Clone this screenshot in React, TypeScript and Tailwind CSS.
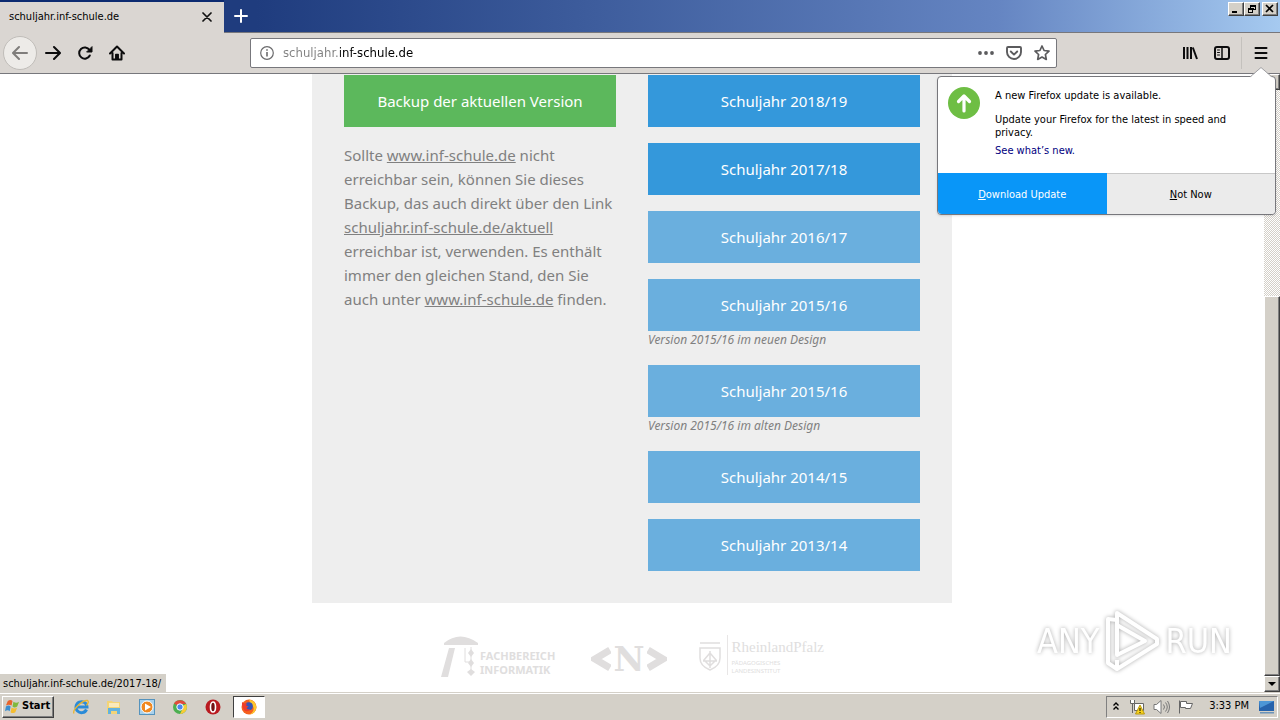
import type { ReactNode } from 'react';

const outset =
  'border border-t-white border-l-white border-r-[#404040] border-b-[#404040] bg-[#d4d0c8] shadow-[inset_-1px_-1px_0_#808080]';

function WindowButton({ label, children }: { label: string; children: ReactNode }) {
  return (
    <button aria-label={label} className={`flex h-[14px] w-4 items-center justify-center ${outset}`}>
      <svg width="12" height="10" viewBox="0 0 12 10" fill="none" stroke="#000" shapeRendering="crispEdges">
        {children}
      </svg>
    </button>
  );
}

function TitleBar() {
  return (
    <header className="flex h-[33px] shrink-0 border-b border-[#77777c] bg-linear-to-r from-[#1f3c7e] from-20% via-[#6585c2] via-78% to-[#a6caf0]">
      <div className="-mb-px flex w-56 items-center justify-between border-t-2 border-[#0c2a70] bg-[#dad6d2] pr-3 pb-px pl-[9px] text-[11px]">
        <span>schuljahr.inf-schule.de</span>
        <button aria-label="Close tab">
          <svg width="10" height="10" viewBox="0 0 10 10" stroke="#111" strokeWidth="1.7" strokeLinecap="round">
            <path d="M1 1l8 8M9 1L1 9" />
          </svg>
        </button>
      </div>
      <button aria-label="New tab" className="flex w-[34px] items-center justify-center">
        <svg width="14" height="14" viewBox="0 0 14 14" stroke="#fff" strokeWidth="2" strokeLinecap="round">
          <path d="M7 1v12M1 7h12" />
        </svg>
      </button>
      <div className="ml-auto flex items-start pt-0.5 pr-0.5">
        <WindowButton label="Minimize">
          <path d="M2 8h5" strokeWidth="2" />
        </WindowButton>
        <WindowButton label="Restore">
          <path d="M4 1h6M4 2h6M9.500 1v5M4.500 1v3M7 5.500h3M2 4.500h5.500M2 5.500h5.500M2.500 4v5M6.500 4v5M2 8.500h5" />
        </WindowButton>
        <div className="w-0.5" />
        <WindowButton label="Close">
          <path d="M2 1l7 7M9 1l-7 7" strokeWidth="1.700" shapeRendering="auto" />
        </WindowButton>
      </div>
    </header>
  );
}

function ToolButton({ label, children }: { label: string; children: ReactNode }) {
  return (
    <button aria-label={label} className="flex size-8 items-center justify-center">
      <svg width="16" height="16" viewBox="0 0 16 16" fill="none" stroke="#0c0c0d" strokeWidth="2" strokeLinecap="round" strokeLinejoin="round">
        {children}
      </svg>
    </button>
  );
}

function Toolbar() {
  return (
    <nav className="flex h-[41px] shrink-0 items-center border-b border-[#77777c] bg-[#dad6d2] pr-[3px] pl-[3px]">
      <button aria-label="Back" className="flex size-[34px] items-center justify-center rounded-full border border-[#c0bdb9] bg-[#edebe8]">
        <svg width="16" height="16" viewBox="0 0 16 16" fill="none" stroke="#7f7d7b" strokeWidth="2" strokeLinecap="round" strokeLinejoin="round">
          <path d="M15 8H1.500M7 2L1 8l6 6" />
        </svg>
      </button>
      <ToolButton label="Forward">
        <path d="M1 8h13.500M9 2l6 6-6 6" />
      </ToolButton>
      <ToolButton label="Reload">
        <path d="M12.800 10.500A5.600 5.600 0 1 1 12.500 5" />
        <path d="M10 7h5V2z" fill="#0c0c0d" strokeWidth="1" />
      </ToolButton>
      <ToolButton label="Home">
        <path d="M1 8.500l7-7 7 7M3.500 8v6.500h9V8" />
        <path d="M6.800 9.500h2.400v4.500H6.800z" strokeWidth="1.500" fill="#0c0c0d" />
      </ToolButton>
      <form className="mr-[117px] ml-[117px] flex h-[30px] min-w-0 flex-1 items-center rounded-xs border border-[#77777c] bg-white pr-1.5 pl-[9px]">
        <svg width="14" height="14" viewBox="0 0 14 14" fill="none" stroke="#6b6b6d" className="shrink-0">
          <circle cx="7" cy="7" r="6.300" strokeWidth="1.200" />
          <path d="M7 6v4.500M7 3.300v1.500" strokeWidth="1.600" />
        </svg>
        <input
          aria-label="Address"
          defaultValue="schuljahr.inf-schule.de"
          className="ml-[9px] min-w-0 flex-1 bg-linear-to-r from-[#808080] from-[57px] to-black to-[57px] bg-clip-text text-[13px] text-transparent outline-none"
        />
        <div className="flex items-center gap-3 text-[#5b5b5d]">
          <button type="button" aria-label="Page actions">
            <svg width="16" height="16" viewBox="0 0 16 16" fill="currentColor">
              <circle cx="2" cy="8" r="1.900" />
              <circle cx="8" cy="8" r="1.900" />
              <circle cx="14" cy="8" r="1.900" />
            </svg>
          </button>
          <button type="button" aria-label="Save to Pocket">
            <svg width="16" height="16" viewBox="0 0 16 16" fill="none" stroke="currentColor" strokeWidth="1.900" strokeLinecap="round" strokeLinejoin="round">
              <path d="M2 2h12a1 1 0 0 1 1 1v4a7 7 0 0 1-14 0V3a1 1 0 0 1 1-1zM4.800 6.500L8 9.600l3.200-3.100" />
            </svg>
          </button>
          <button type="button" aria-label="Bookmark">
            <svg width="16" height="16" viewBox="0 0 16 16" fill="none" stroke="currentColor" strokeWidth="1.700" strokeLinejoin="round">
              <path d="M8 1l2.100 4.500 4.900.600-3.600 3.400.900 4.900L8 12l-4.300 2.400.900-4.900L1 6.100l4.900-.600z" />
            </svg>
          </button>
        </div>
      </form>
      <ToolButton label="Library">
        <path d="M2 2v12M5.500 2v12M9 2v12M10.800 2.500L15 14" strokeLinecap="butt" />
      </ToolButton>
      <ToolButton label="Sidebars">
        <rect x="1" y="2" width="14" height="12" rx="2" />
        <path d="M8 2v12" strokeWidth="1.500" />
        <path d="M3.500 5h2M3.500 7.500h2M3.500 10h2" strokeWidth="1" />
      </ToolButton>
      <div className="mr-[3px] ml-[3px] h-8 border-l border-[#c4c1bd]" />
      <ToolButton label="Menu">
        <path d="M2.500 3h11M2.500 8h11M2.500 13h11" />
      </ToolButton>
    </nav>
  );
}

const years = [
  { label: 'Schuljahr 2018/19', recent: true },
  { label: 'Schuljahr 2017/18', recent: true },
  { label: 'Schuljahr 2016/17' },
  { label: 'Schuljahr 2015/16', note: 'Version 2015/16 im neuen Design' },
  { label: 'Schuljahr 2015/16', note: 'Version 2015/16 im alten Design' },
  { label: 'Schuljahr 2014/15' },
  { label: 'Schuljahr 2013/14' },
];

function Logos() {
  return (
    <footer className="mx-auto mt-7 flex w-96 items-start text-[#e0dede]">
      <div className="flex items-end pt-1">
        <svg width="40" height="42" viewBox="0 0 40 42" fill="currentColor">
          <path d="M4 8Q20-5 38 8v2H4zM9 13h6L8 42H1z" />
          <path d="M31 14l3 4-3 4-3-4zM31 24l3 4-3 4-3-4zM31 34l4 3-4 4-4-4z" />
          <path d="M25 13v14h5M31 12v26" stroke="currentColor" fill="none" />
        </svg>
        <p className="text-[11px] leading-[14px] font-bold">
          FACHBEREICH
          <br />
          INFORMATIK
        </p>
      </div>
      <div className="ml-auto flex items-center pt-3">
        <svg width="20" height="24" viewBox="0 0 20 24" fill="none" stroke="currentColor" strokeWidth="7">
          <path d="M19 3L4 12l15 9" />
        </svg>
        <span className="px-0.5 font-['DejaVu_Serif',serif] text-[34px] leading-8 font-bold">N</span>
        <svg width="20" height="24" viewBox="0 0 20 24" fill="none" stroke="currentColor" strokeWidth="7">
          <path d="M1 3l15 9-15 9" />
        </svg>
      </div>
      <div className="ml-8 flex pt-1">
        <svg width="22" height="30" viewBox="0 0 22 30" fill="none" stroke="currentColor" className="mt-1.5">
          <path d="M1 2h20M1 7h20v10q0 8-10 12Q1 25 1 17z" strokeWidth="1.500" />
          <path d="M11 12l6 7-6 6-6-6zM4 20h14M11 10v17" strokeWidth="1.500" />
        </svg>
        <div className="ml-1.5 border-l border-[#e8e6e6] pl-1">
          <p className="font-['Liberation_Serif',serif] text-[15px] leading-6">RheinlandPfalz</p>
          <p className="text-[6px] leading-[8px]">
            PÄDAGOGISCHES
            <br />
            LANDESINSTITUT
          </p>
        </div>
      </div>
    </footer>
  );
}

function Page() {
  return (
    <main className="min-w-0 flex-1 overflow-hidden bg-white font-['Noto_Sans',sans-serif] text-[15px] leading-6 text-[#808080]">
      <div className="mx-auto grid w-[640px] grid-cols-2 gap-8 bg-[#eee] px-8 pt-px pb-8">
        <section>
          <a href="#aktuell" className="block bg-[#5cb85c] py-[14px] text-center text-white">
            Backup der aktuellen Version
          </a>
          <p className="mt-4 whitespace-nowrap">
            Sollte <a href="#inf-schule" className="underline">www.inf-schule.de</a> nicht
            <br />
            erreichbar sein, können Sie dieses
            <br />
            Backup, das auch direkt über den Link
            <br />
            <a href="#aktuell" className="underline">schuljahr.inf-schule.de/aktuell</a>
            <br />
            erreichbar ist, verwenden. Es enthält
            <br />
            immer den gleichen Stand, den Sie
            <br />
            auch unter <a href="#inf-schule" className="underline">www.inf-schule.de</a> finden.
          </p>
        </section>
        <section className="flex flex-col gap-4">
          {years.map((year, i) => (
            <div key={i}>
              <a href="#schuljahr" className={`block py-[14px] text-center text-white ${year.recent ? 'bg-[#3498db]' : 'bg-[#6aafde]'}`}>
                {year.label}
              </a>
              {year.note && <p className="text-[12px] leading-[18px] italic">{year.note}</p>}
            </div>
          ))}
        </section>
      </div>
      <Logos />
    </main>
  );
}

function ScrollBar() {
  return (
    <div className="flex w-4 shrink-0 flex-col bg-[#eae8e4] bg-[repeating-conic-gradient(#d4d0c8_0_25%,#fff_0_50%)] bg-size-[2px_2px]">
      <button aria-label="Scroll up" className={`flex h-4 items-center justify-center ${outset}`}>
        <svg width="8" height="4" viewBox="0 0 8 4"><path d="M0 4l4-4 4 4z" /></svg>
      </button>
      <div className="flex-207" />
      <div className={`flex-379 ${outset}`} />
      <button aria-label="Scroll down" className={`flex h-4 items-center justify-center ${outset}`}>
        <svg width="8" height="4" viewBox="0 0 8 4"><path d="M0 0h8L4 4z" /></svg>
      </button>
    </div>
  );
}

function UpdatePopup() {
  return (
    <aside className="absolute top-[76px] right-1 w-[339px] rounded-sm border border-[#77777c] bg-white text-[11px] leading-[13px] shadow-sm">
      <svg width="22" height="11" viewBox="0 0 22 11" className="absolute -top-[10px] right-[3px]">
        <path d="M0 10.500L11 .500l11 10z" fill="#fff" />
        <path d="M0 10L11 .500 22 10" fill="none" stroke="#a0a0a3" />
      </svg>
      <div className="flex h-24 gap-[15px] pt-[10px] pl-[10px]">
        <svg width="32" height="32" viewBox="0 0 32 32" className="shrink-0">
          <circle cx="16" cy="16" r="16" fill="#6ebe44" />
          <path d="M16 24V9M10.500 14.500L16 9l5.500 5.500" fill="none" stroke="#fff" strokeWidth="3.200" strokeLinecap="round" strokeLinejoin="round" />
        </svg>
        <div className="pt-0.5 whitespace-nowrap">
          <p>A new Firefox update is available.</p>
          <p className="mt-[11px]">
            Update your Firefox for the latest in speed and
            <br />
            privacy.
          </p>
          <a href="#whats-new" className="mt-[5px] block text-[#000080]">See what’s new.</a>
        </div>
      </div>
      <div className="grid h-[41px] grid-cols-2">
        <button className="rounded-bl-sm border-t border-[#0996f8] bg-[#0996f8] text-white"><u>D</u>ownload Update</button>
        <button className="rounded-br-sm border-t border-[#c8c8c8] bg-[#ebebeb]"><u>N</u>ot Now</button>
      </div>
    </aside>
  );
}

function Watermark() {
  return (
    <div className="absolute right-12 bottom-[47px] flex items-center gap-1 font-['Liberation_Sans_Narrow','DejaVu_Sans_Condensed',sans-serif] text-[34px] leading-none text-white drop-shadow-[0_0_2px_#aaa]">
      <span>ANY</span>
      <svg width="58" height="64" viewBox="0 0 58 64" fill="none" stroke="#fff" strokeWidth="4" strokeLinejoin="round">
        <path d="M14 16V4l40 26v5L14 60V51" />
        <path d="M14 11l-9-1v44l9 6M14 16v30l28-14z" />
      </svg>
      <span>RUN</span>
    </div>
  );
}

function TaskIcon({ label, children }: { label: string; children: ReactNode }) {
  return (
    <button aria-label={label} className="flex h-[22px] w-[33px] items-center justify-center">
      <svg width="16" height="16" viewBox="0 0 16 16">{children}</svg>
    </button>
  );
}

function TaskBar() {
  return (
    <footer className="flex h-7 shrink-0 items-center border-t border-[#d4d0c8] bg-[#d4d0c8] pr-0.5 pl-0.5 shadow-[inset_0_1px_0_#fff]">
      <button className={`mr-[10px] flex h-[22px] w-[52px] items-center gap-0.5 pl-0.5 text-[11px] font-bold ${outset}`}>
        <svg width="15" height="15" viewBox="0 0 16 16" className="shrink-0">
          <path d="M3 2q3-2 5 0L7 7Q4 5 1 7z" fill="#e8642c" />
          <path d="M9 3q3 2 6 0l-2 5q-3 2-5 0z" fill="#80b83c" />
          <path d="M1 8q3-2 5 0l-1 5q-2-2-5 0z" fill="#3b8ed0" />
          <path d="M7 9q3 2 6 0l-2 5q-3 2-5 0z" fill="#f5bd30" />
        </svg>
        Start
      </button>
      <TaskIcon label="Internet Explorer">
        <path d="M13.500 10.500A5.500 5.500 0 1 1 14 8H4" fill="none" stroke="#2a8bd8" strokeWidth="3" />
        <path d="M1 14.500C-1 11 9 1 14.500 1.500q2 1-1 5" fill="none" stroke="#e9b530" strokeWidth="1.300" />
      </TaskIcon>
      <TaskIcon label="Explorer">
        <path d="M1 2h5l1 1h7v12H1z" fill="#f3d477" />
        <path d="M3 5h10M3 7h10" stroke="#fff" />
        <path d="M2 9h12v6h-3v-3H5v3H2z" fill="#62b2df" />
      </TaskIcon>
      <TaskIcon label="Media Player">
        <rect x=".500" y=".500" width="15" height="15" fill="#a8d1ec" stroke="#5593bd" />
        <circle cx="8" cy="8" r="6" fill="#f08820" stroke="#fff" />
        <path d="M6 4.500v7L12 8z" fill="#fff" />
      </TaskIcon>
      <TaskIcon label="Chrome">
        <circle cx="8" cy="8" r="7" fill="#4caf50" />
        <path d="M8 8L2 4.500A7 7 0 0 1 14.200 5H8z" fill="#e14a3b" />
        <path d="M8 8l6.200-3A7 7 0 0 1 8 15l3-6z" fill="#f9cc35" />
        <circle cx="8" cy="8" r="3.200" fill="#4a87ee" stroke="#fff" />
      </TaskIcon>
      <TaskIcon label="Opera">
        <circle cx="8" cy="8" r="7.500" fill="#b91a20" />
        <ellipse cx="8" cy="8" rx="2.500" ry="5" fill="#721014" stroke="#fff" strokeWidth="1.600" />
      </TaskIcon>
      <div className="ml-1 border border-t-[#404040] border-r-white border-b-white border-l-[#404040] bg-white">
        <button aria-label="Firefox" className="flex h-5 w-[30px] items-center justify-center">
          <svg width="16" height="16" viewBox="0 0 16 16">
            <circle cx="8" cy="8" r="7.500" fill="#f5601e" />
            <path d="M8 .500q7 1 7.500 8-1 6-7 7 5-3 4-7-1-3-3.500-5z" fill="#fcc62d" />
            <circle cx="7.800" cy="7.300" r="4" fill="#3454b8" />
            <path d="M1 3l2.500 1.500L6 4.500 5 6.500l2.500 1-2 1.500q1 2 4 1.500-3 3-6 1Q.500 8 1 3z" fill="#ee3b2b" />
          </svg>
        </button>
      </div>
      <div className="ml-auto flex h-[22px] w-[172px] items-center border border-t-[#808080] border-r-white border-b-white border-l-[#808080] pr-0.5 pl-1.5 text-[11px]">
        <svg width="6" height="9" viewBox="0 0 6 9" fill="none" stroke="#000" strokeWidth="1.400">
          <path d="M.500 3.500L3 1l2.500 2.500M.500 7.500L3 5l2.500 2.500" />
        </svg>
        <svg width="16" height="16" viewBox="0 0 16 16" fill="#fff" stroke="#666" className="ml-[10px]">
          <path d="M5.500 4.500h9v7h-9zM7 14.500h6M1.500 1v3.500h4V1M3.500 5v9" />
          <path d="M11 6l4.500 9h-9z" fill="#f8d21c" stroke="#b89810" />
          <path d="M11 9v3M11 13v1" stroke="#000" />
        </svg>
        <svg width="17" height="16" viewBox="0 0 17 16" fill="#fff" stroke="#777" className="ml-2">
          <path d="M1 5.500h2.500L8 1.500v13l-4.500-4H1z" />
          <path d="M10.500 5.500q2 2.500 0 5M12.500 3.500q3.500 4.500 0 9M14.500 2q4 6 0 12" fill="none" />
        </svg>
        <svg width="16" height="16" viewBox="0 0 16 16" fill="#fff" stroke="#666" className="ml-2">
          <path d="M1.500 1.500v13M2.500 2.500h6v2h6l-2 5h-5v-1h-5z" />
        </svg>
        <time className="ml-auto whitespace-nowrap">3:33 PM</time>
        <svg width="16" height="14" viewBox="0 0 16 14" className="ml-[10px]">
          <path d="M0 1h15v10H0z" fill="#2663ac" />
          <path d="M0 1h15L1 8z" fill="#4c96d6" />
          <path d="M1 12h14v1.500H1z" fill="#6b93b9" />
        </svg>
      </div>
    </footer>
  );
}

export default function App() {
  return (
    <div className="relative flex h-screen flex-col overflow-hidden bg-white font-['DejaVu_Sans_Condensed','DejaVu_Sans',sans-serif] text-black">
      <TitleBar />
      <Toolbar />
      <div className="relative flex min-h-0 flex-1">
        <Page />
        <ScrollBar />
        <div className="absolute bottom-0 left-0 h-[18px] bg-[#d4d0c8] pr-[5px] pl-[3px] text-[11px] leading-[20px]">
          schuljahr.inf-schule.de/2017-18/
        </div>
      </div>
      <TaskBar />
      <UpdatePopup />
      <Watermark />
    </div>
  );
}
